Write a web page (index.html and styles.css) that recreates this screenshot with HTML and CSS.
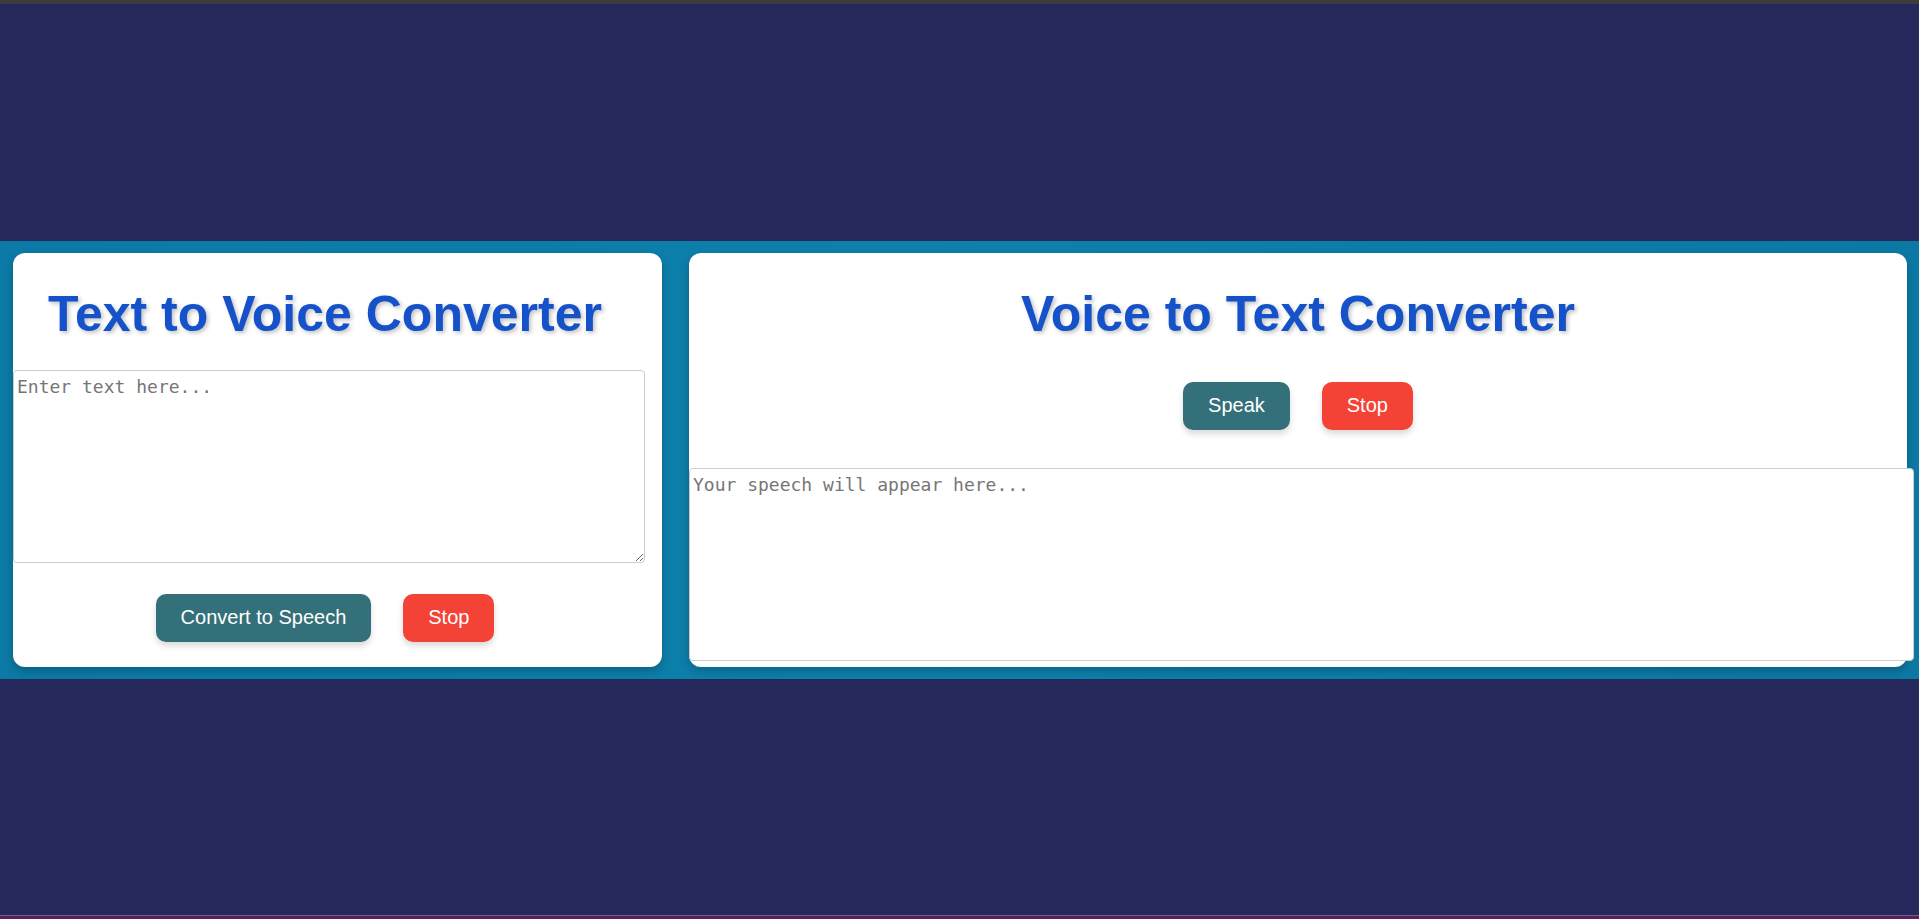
FILE: index.html
```html
<!DOCTYPE html>
<html lang="en">
<head>
<meta charset="utf-8">
<title>Text / Voice Converter</title>
<link rel="stylesheet" href="styles.css">
</head>
<body>
<div class="page">
  <div class="topline"></div>
  <div class="spacer"></div>
  <main class="band">
    <section class="card card-left">
      <h1 class="title">Text to Voice Converter</h1>
      <textarea class="box box-left" placeholder="Enter text here..."></textarea>
      <div class="actions actions-left">
        <button class="btn btn-main">Convert to Speech</button>
        <button class="btn btn-stop">Stop</button>
      </div>
    </section>
    <section class="card card-right">
      <h1 class="title">Voice to Text Converter</h1>
      <div class="actions actions-right">
        <button class="btn btn-main">Speak</button>
        <button class="btn btn-stop">Stop</button>
      </div>
      <textarea class="box box-right" placeholder="Your speech will appear here..." readonly></textarea>
    </section>
  </main>
  <div class="spacer"></div>
  <div class="bottomline"></div>
</div>
</body>
</html>
```
FILE: styles.css
```css
html, body {
  margin: 0;
  padding: 0;
}
body {
  background: #25285a;
  font-family: "Liberation Sans", Arial, sans-serif;
}
.page {
  height: 919px;
  display: flex;
  flex-direction: column;
  overflow: hidden;
}
.topline {
  height: 4px;
  background: #3c3c3f;
  flex: none;
}
.spacer {
  flex: 1;
}
.bottomline {
  height: 4px;
  flex: none;
  background: #5b1f60;
  border-top: 1px solid #6e5f82;
  box-sizing: border-box;
}
.band {
  flex: none;
  display: flex;
  align-items: stretch;
  gap: 27px;
  padding: 12px 12px 12px 13px;
  background: linear-gradient(90deg, #0c7aa6 0%, #0d80ac 50%, #0c79a4 100%);
}
.card {
  background: #ffffff;
  border-radius: 12px;
  box-shadow: 0 4px 10px rgba(0, 0, 0, 0.22);
  display: flex;
  flex-direction: column;
  align-items: flex-start;
  box-sizing: border-box;
}
.card-left {
  width: 649px;
  flex: none;
  padding-right: 25px;
}
.card-right {
  flex: 1;
}
.title {
  align-self: stretch;
  margin: 33px 0 0;
  text-align: center;
  font-size: 50px;
  line-height: 56px;
  font-weight: bold;
  color: #1552c9;
  text-shadow: 2px 2px 4px rgba(0, 0, 0, 0.25);
}
.box {
  display: block;
  box-sizing: border-box;
  height: 193px;
  width: calc(100% + 8px);
  padding: 5px 3px 2px;
  border: 1px solid #cccccc;
  border-radius: 4px;
  font-family: "DejaVu Sans Mono", "Liberation Mono", monospace;
  font-size: 18px;
  color: #222;
  background: #ffffff;
  position: relative;
}
.box::placeholder {
  color: #767676;
}
.box-left {
  margin-top: 28px;
}
.box-right {
  margin-top: 38px;
  margin-bottom: 6px;
  width: calc(100% + 7px);
  resize: none;
}
.actions {
  align-self: stretch;
  display: flex;
  justify-content: center;
  gap: 32px;
}
.actions-left {
  margin-top: 31px;
  margin-bottom: 25px;
}
.actions-right {
  margin-top: 40px;
}
.btn {
  height: 48px;
  padding: 0 25px;
  border: none;
  border-radius: 10px;
  font-family: "Liberation Sans", Arial, sans-serif;
  font-size: 20px;
  color: #ffffff;
  box-shadow: 0 4px 6px rgba(0, 0, 0, 0.15);
  cursor: pointer;
}
.btn-main {
  background: #347079;
}
.btn-stop {
  background: #f44336;
}
```
